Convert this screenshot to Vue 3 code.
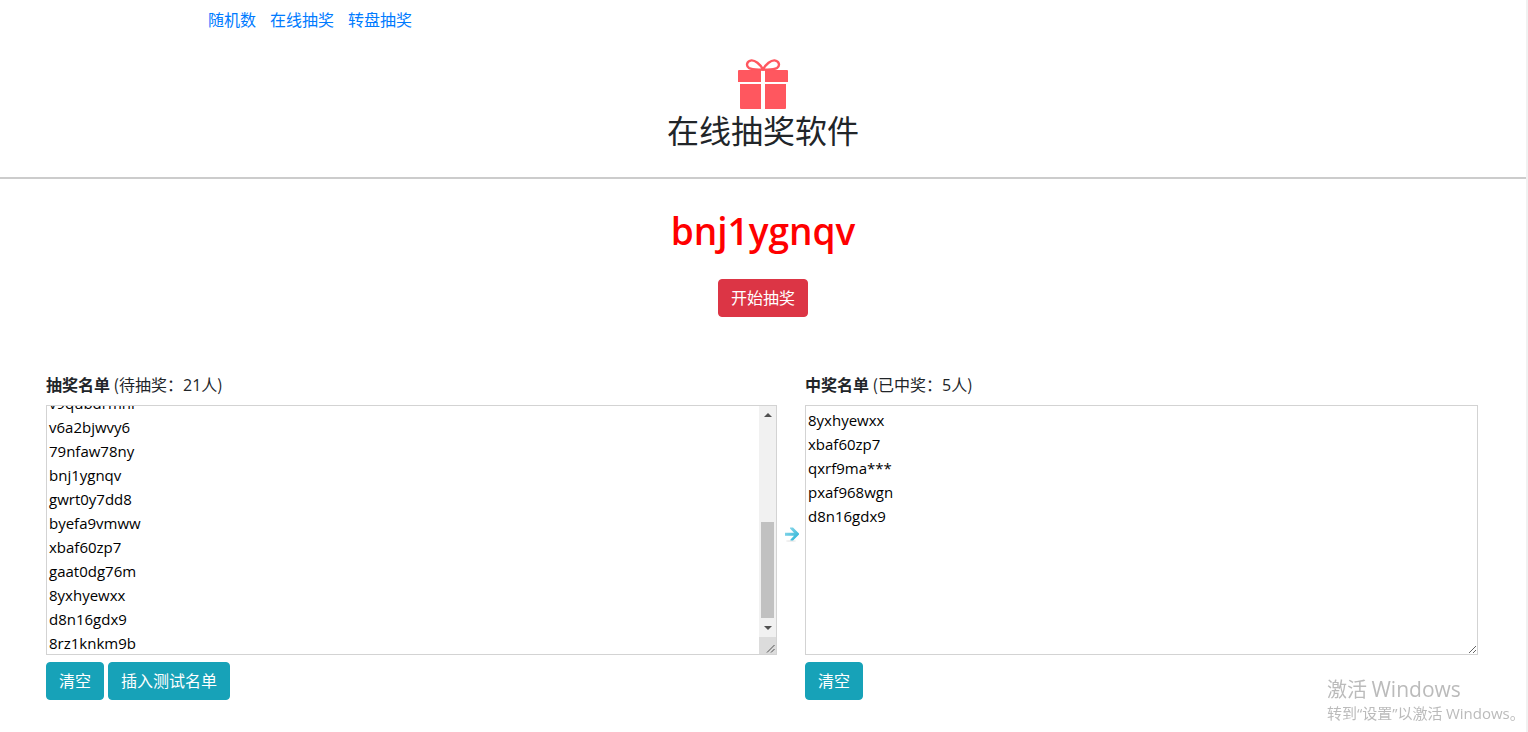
<script setup>
import { computed, nextTick, onMounted, ref } from 'vue'

const links = ['随机数', '在线抽奖', '转盘抽奖']
const testNames = [
  'k3tw8ehc2p', 'm7xr4vbn1d', 'a5gzq90ksy', 'h2pjd6wfe8', 'qxrf9mauz4',
  'pxaf968wgn', 't4cy7snb3k', 'e8wmv2rhq5', 'c9fhj3tvw6', 'n6dkz1pgx7',
  'v9qubdrmhr', 'v6a2bjwvy6', '79nfaw78ny', 'bnj1ygnqv', 'gwrt0y7dd8',
  'byefa9vmww', 'xbaf60zp7', 'gaat0dg76m', '8yxhyewxx', 'd8n16gdx9',
  '8rz1knkm9b',
]
const pending = ref(testNames.join('\n'))
const winners = ref(['8yxhyewxx', 'xbaf60zp7', 'qxrf9ma***', 'pxaf968wgn', 'd8n16gdx9'].join('\n'))
const pendingCount = ref(testNames.length)
const winnerCount = ref(5)
const current = ref('bnj1ygnqv')
const pendingBox = ref(null)

const trackHeight = 197
const scroll = ref({ top: 0, view: 248, full: 248 })
const thumb = computed(() => ({
  height: Math.round((scroll.value.view / scroll.value.full) * trackHeight) + 'px',
  marginTop: Math.floor((scroll.value.top / scroll.value.full) * trackHeight) + 'px',
}))

function readScroll() {
  const box = pendingBox.value
  scroll.value = { top: box.scrollTop, view: box.clientHeight, full: box.scrollHeight }
}
async function setPending(text, count) {
  pending.value = text
  pendingCount.value = count
  await nextTick()
  readScroll()
}
function clearPending() {
  setPending('', 0)
}
function insertTest() {
  setPending(testNames.join('\n'), testNames.length)
}
function clearWinners() {
  winners.value = ''
  winnerCount.value = 0
}
function draw() {
  const names = pending.value.split('\n').filter(Boolean)
  if (!names.length) return
  current.value = names[Math.floor(Math.random() * names.length)]
  winners.value = winners.value ? winners.value + '\n' + current.value : current.value
  winnerCount.value += 1
}

onMounted(async () => {
  await nextTick()
  const lineHeight = 24
  pendingBox.value.scrollTop = testNames.length * lineHeight - 247
  readScroll()
})
</script>

<template>
  <div class="page">
    <nav class="nav">
      <a v-for="link in links" :key="link" href="#">{{ link }}</a>
    </nav>

    <header class="header">
      <svg class="gift" viewBox="0 0 50 50" aria-hidden="true">
        <g fill="#ff575f">
          <path d="M1 11H23V23H0V12Q0 11 1 11Z" />
          <path d="M27 11H49Q50 11 50 12V23H27Z" />
          <path d="M2 25H23V50H3Q2 50 2 49Z" />
          <path d="M27 25H48V49Q48 50 47 50H27Z" />
        </g>
        <g fill="none" stroke="#ff575f" stroke-width="2.4">
          <path d="M25 10.500C22 5 17 1.200 13.500 1.400C9 1.800 7.500 6.500 11 9Q14 11 25 10.500Z" />
          <path d="M25 10.500C28 5 33 1.200 36.500 1.400C41 1.800 42.500 6.500 39 9Q36 11 25 10.500Z" />
        </g>
      </svg>
      <h1>在线抽奖软件</h1>
    </header>

    <main>
      <section class="draw">
        <h2>{{ current }}</h2>
        <button type="button" class="btn danger" @click="draw">开始抽奖</button>
      </section>

      <section class="lists">
        <div class="column">
          <label for="pending"><strong>抽奖名单</strong> (待抽奖：<span>{{ pendingCount }}</span>人)</label>
          <div class="box">
            <textarea id="pending" ref="pendingBox" v-model="pending" spellcheck="false" @scroll="readScroll"></textarea>
            <div class="scrollbar" aria-hidden="true">
              <svg viewBox="0 0 17 17"><path d="M5 11h8L9 7z" fill="#505050" /></svg>
              <div class="track"><div class="thumb" :style="thumb"></div></div>
              <svg viewBox="0 0 17 17"><path d="M5 6h8L9 10z" fill="#505050" /></svg>
              <svg class="grip" viewBox="0 0 17 17"><path d="M8 15.500l7.500-7.500M12 15.500l3.500-3.500" stroke="#505050" fill="none" /></svg>
            </div>
          </div>
          <div class="actions">
            <button type="button" class="btn info" @click="clearPending">清空</button>
            <button type="button" class="btn info" @click="insertTest">插入测试名单</button>
          </div>
        </div>

        <svg class="arrow" viewBox="0 0 16 16" aria-hidden="true">
          <defs>
            <linearGradient id="arrow-fill" x1="0" y1="0" x2="1" y2="1">
              <stop offset="0" stop-color="#9adcec" />
              <stop offset="1" stop-color="#22b2d6" />
            </linearGradient>
          </defs>
          <ellipse cx="7" cy="15" rx="5" ry="1" fill="#eeeeee" />
          <path d="M1 6.700H10L6 2.500V1.500H9L15 7.500V8.500L9 14.500H6.500V13.500L10 9.700H1Z" fill="url(#arrow-fill)" />
        </svg>

        <div class="column">
          <label for="winners"><strong>中奖名单</strong> (已中奖：<span>{{ winnerCount }}</span>人)</label>
          <div class="box">
            <textarea id="winners" v-model="winners" spellcheck="false"></textarea>
          </div>
          <div class="actions">
            <button type="button" class="btn info" @click="clearWinners">清空</button>
          </div>
        </div>
      </section>
    </main>

    <aside class="activation">
      <p class="activation-title">激活 <span>Windows</span></p>
      <p class="activation-text">转到<span>“</span>设置<span>”</span>以激活 <span>Windows</span>。</p>
    </aside>
  </div>
</template>

<style>
body {
  background: #ffffff;
}
</style>

<style scoped>
.page {
  box-sizing: border-box;
  min-height: 100vh;
  border-right: 2px solid #f1f1f1;
  color: #212529;
  font: 16px/24px "Noto Sans CJK SC", sans-serif;
}
.nav {
  box-sizing: border-box;
  display: flex;
  gap: 14px;
  max-width: 1140px;
  margin: 0 auto;
  padding: 7px 15px 9px;
}
a {
  color: #007bff;
  text-decoration: none;
}
.header {
  display: flex;
  flex-direction: column;
  align-items: center;
  padding: 19px 0 28px;
  border-bottom: 2px solid #cccccc;
}
.gift {
  width: 50px;
  height: 50px;
}
h1 {
  margin: 0;
  font-size: 32px;
  line-height: 40px;
  font-weight: 400;
}
.draw {
  display: flex;
  flex-direction: column;
  align-items: center;
  gap: 24px;
  padding-top: 28px;
}
h2 {
  margin: 0;
  color: #ff0000;
  font-family: "Open Sans", sans-serif;
  font-size: 37px;
  line-height: 48px;
  font-weight: 600;
}
.btn {
  padding: 5px 12px 7px;
  border: 1px solid;
  border-radius: 4px;
  color: #ffffff;
  font: inherit;
  cursor: pointer;
}
.danger {
  background: #dc3545;
  border-color: #dc3545;
}
.info {
  background: #17a2b8;
  border-color: #17a2b8;
}
.lists {
  display: grid;
  grid-template-columns: 731fr 28px 673fr;
  padding: 55px 48px 32px 46px;
}
.column {
  display: flex;
  flex-direction: column;
  min-width: 0;
}
label span {
  font-family: "Open Sans", sans-serif;
}
.box {
  position: relative;
  margin: 8px 0 7px;
}
textarea {
  box-sizing: border-box;
  display: block;
  width: 100%;
  height: 250px;
  margin: 0;
  padding: 2px;
  border: 1px solid #d3d3d3;
  outline: none;
  background: #ffffff;
  color: #000000;
  font: 15px/24px "Open Sans", sans-serif;
  resize: vertical;
}
#pending {
  scrollbar-width: none;
}
.scrollbar {
  position: absolute;
  top: 1px;
  right: 1px;
  bottom: 1px;
  display: flex;
  flex-direction: column;
  width: 17px;
  background: #f1f1f1;
  pointer-events: none;
}
.scrollbar svg {
  display: block;
  width: 17px;
  height: 17px;
}
.track {
  flex: 1;
  min-height: 0;
  overflow: hidden;
}
.thumb {
  margin: 0 2px;
  background: #c1c1c1;
}
.scrollbar .grip {
  background: #dcdcdc;
}
.actions {
  display: flex;
  gap: 4px;
}
.arrow {
  width: 16px;
  height: 16px;
  margin: 154px 5px 0 7px;
}
.activation {
  position: fixed;
  right: 4px;
  bottom: 7px;
  width: 197px;
  color: #bbbbbb;
  white-space: nowrap;
  pointer-events: none;
}
.activation p {
  margin: 0;
}
.activation span {
  font-family: "Open Sans", sans-serif;
}
.activation-title {
  font-size: 20px;
  line-height: 24px;
}
.activation-title span {
  font-size: 21px;
}
.activation-text {
  font-size: 15px;
  line-height: 24px;
}
</style>
